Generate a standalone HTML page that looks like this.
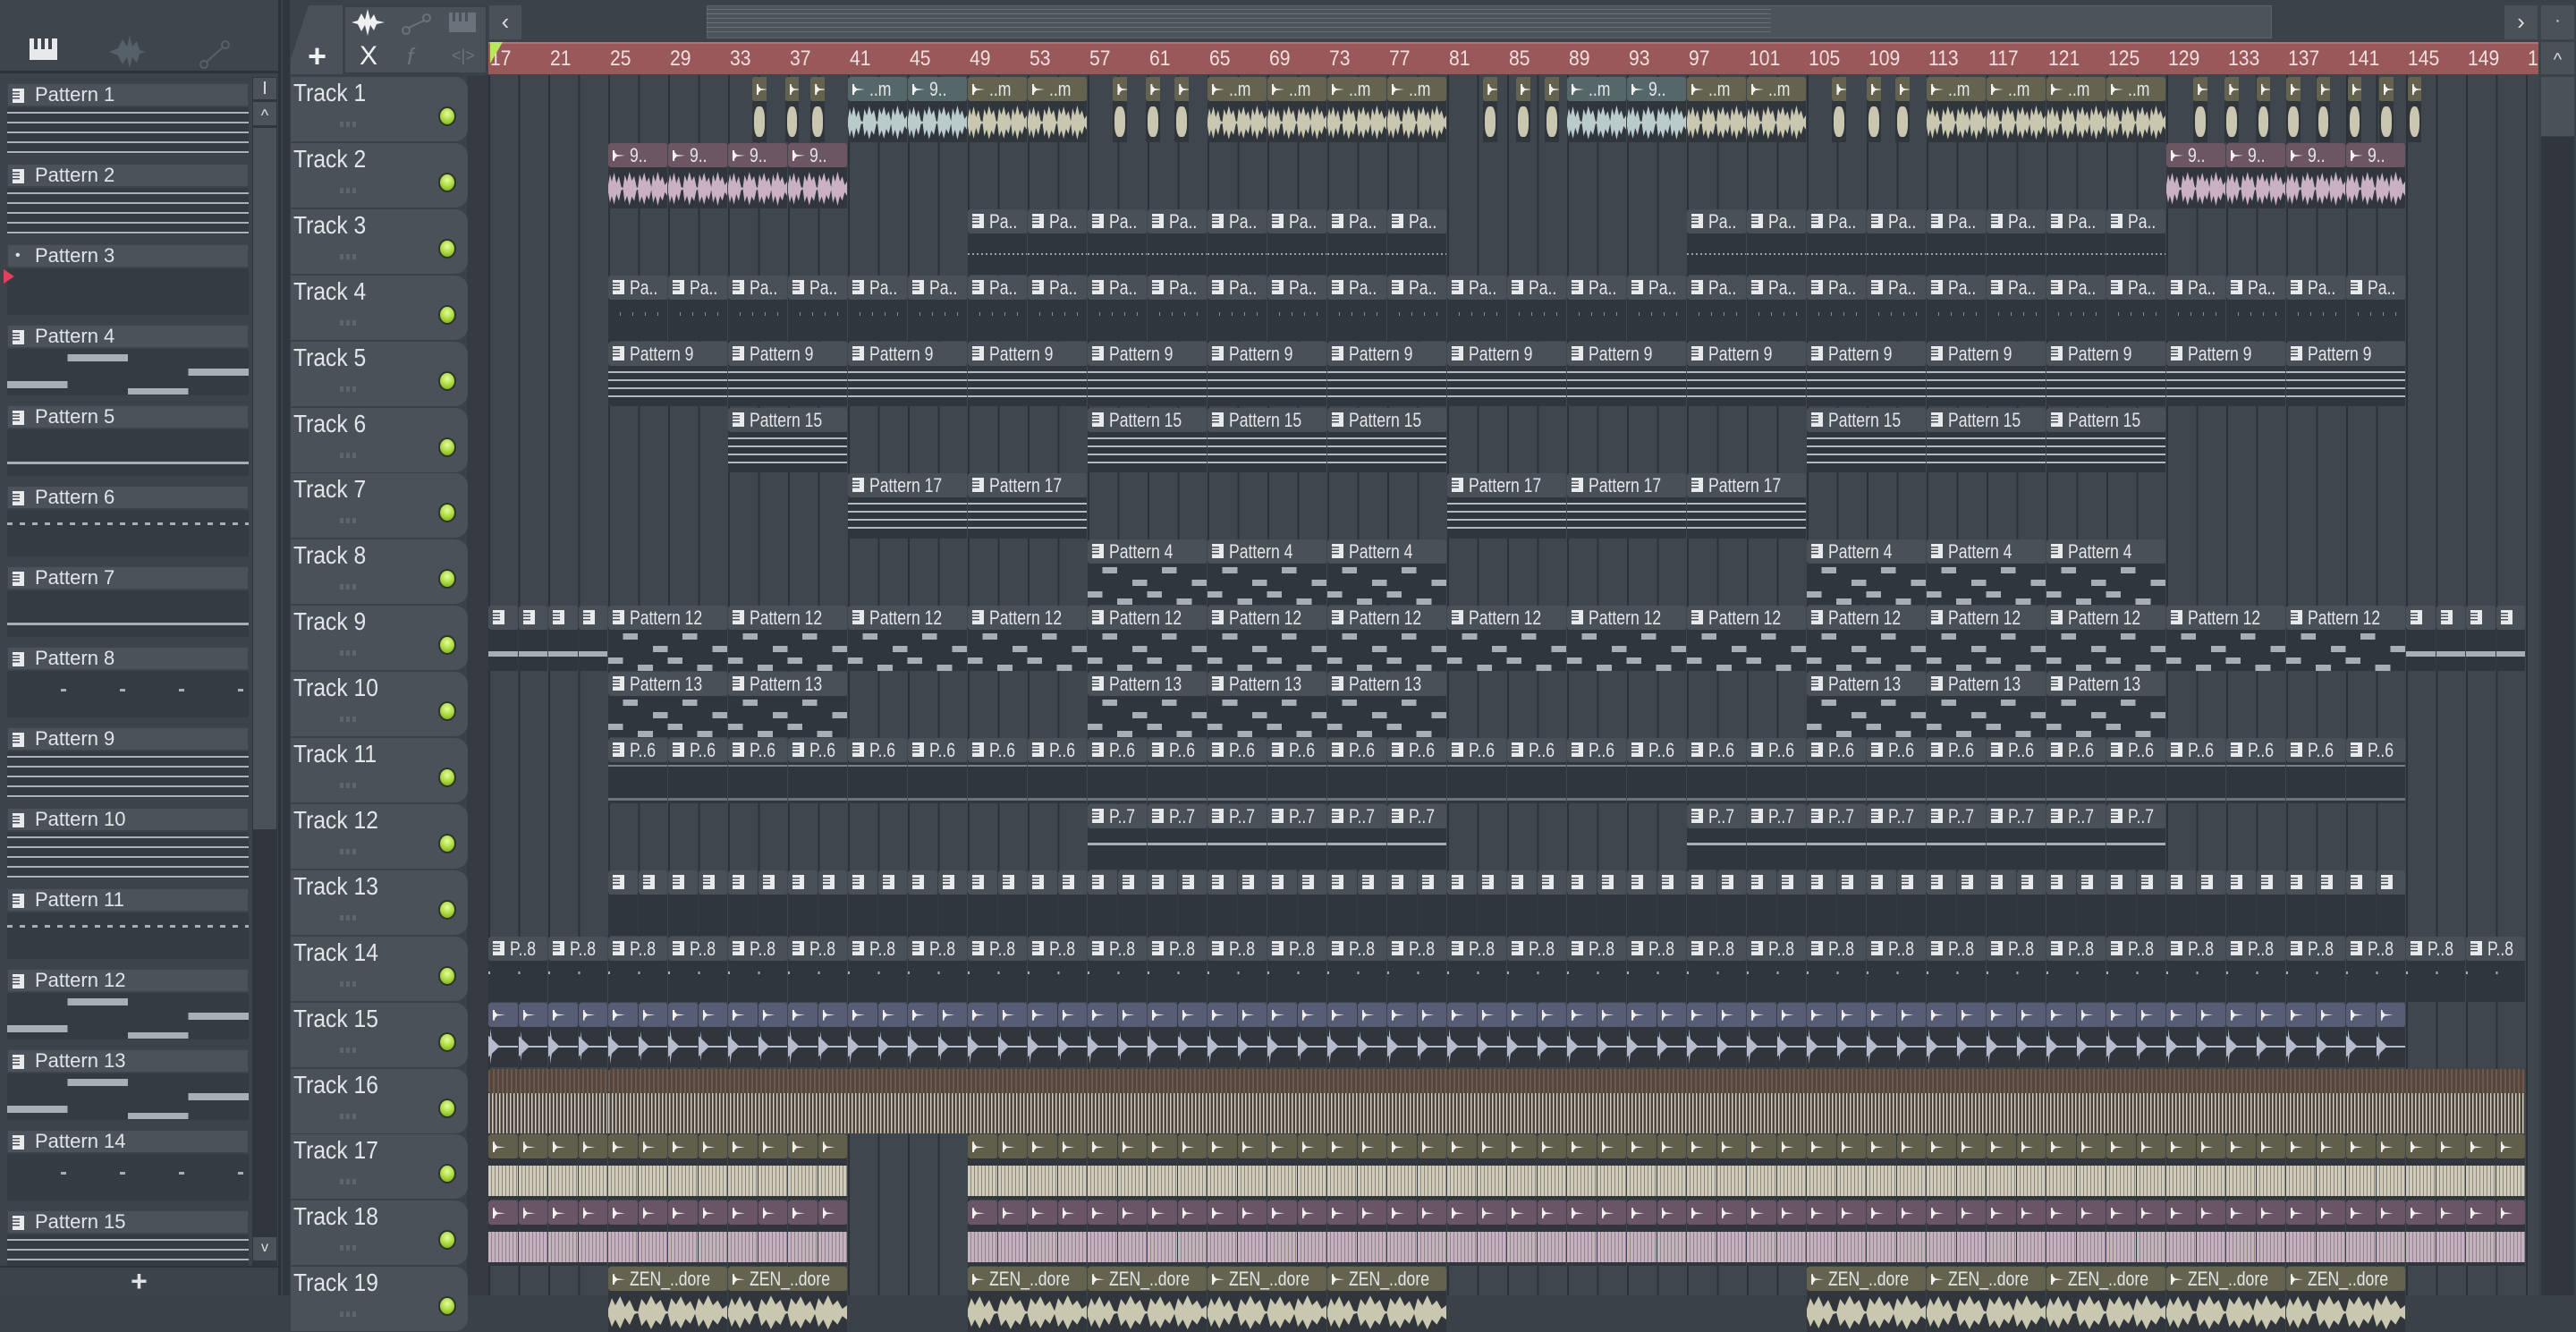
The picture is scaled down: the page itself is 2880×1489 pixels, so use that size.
<!DOCTYPE html>
<html><head><meta charset="utf-8">
<style>
*{margin:0;padding:0;box-sizing:border-box}
body{width:2880px;height:1448px;overflow:hidden;background:#3a4148;font-family:"Liberation Sans Narrow","Liberation Sans",sans-serif;color:#dde1e4;position:relative}
.a{position:absolute}
.pl{position:absolute;left:0;top:0;width:314px;height:1448px;background:#3c434a;border-right:3px solid #2c3237}
.ph{position:absolute;left:8px;width:270px;height:26px;background:#4b5259;border:1px solid #3f454c;font-size:22px;line-height:24px;padding-left:30px;color:#e2e5e8}
.pv{position:absolute;left:8px;width:270px;height:52px;background:#353b42}
.ic{position:absolute;width:13px;height:16px;background:#e8eaec;left:5px;top:5px}
.ic:after{content:"";position:absolute;left:0;top:3px;width:8px;height:10px;background:repeating-linear-gradient(#4b5259 0 1.5px,transparent 1.5px 3.5px)}
.th{position:absolute;left:325px;width:198px;height:72px;background:#4a5158;border-radius:0 14px 14px 0;}
.th span{position:absolute;left:3px;top:2px;font-size:28px;color:#e3e6e8;transform:scaleX(.88);transform-origin:left;white-space:nowrap}
.th i{position:absolute;left:55px;top:50px;width:20px;height:6px;background:repeating-linear-gradient(90deg,#5e656c 0 4px,transparent 4px 7px)}
.led{position:absolute;left:490px;width:20px;height:22px;border-radius:50%;background:radial-gradient(circle at 50% 35%,#e4ff9a,#a6d63a 55%,#6f9a1e);border:2px solid #2d3329}
.c{position:absolute;overflow:hidden}
.ch{position:absolute;left:0;top:0;right:0;height:27px;border-radius:3px;font-size:22px;line-height:27px;padding-left:26px;white-space:nowrap;color:#e4e6e8;overflow:hidden}
.ch b{font-weight:normal;position:absolute;left:24px;top:0;white-space:nowrap;transform:scaleX(.8);transform-origin:left}
.cb{position:absolute;left:0;right:0;top:27px;bottom:0}
.ap:before{content:"";position:absolute;left:5px;top:8px;width:14px;height:12px;background:#f3f0f0;clip-path:polygon(0 0,15% 0,15% 40%,100% 50%,15% 60%,15% 100%,0 100%,0 0,40% 50%,0 100%)}
.wv{position:absolute;left:0;right:0}
</style></head><body>

<div class="a" style="left:0;top:0;width:2880px;height:84px;background:#3b4249"></div>
<div class="pl">
  <div class="a" style="left:0;top:0;width:311px;height:82px;background:#3e454c;border-bottom:3px solid #2d3338"></div>
  <div class="a" style="left:33px;top:43px;width:31px;height:24px;background:#e7e9eb"></div>
  <div class="a" style="left:38px;top:43px;width:4px;height:12px;background:#3e454c"></div>
  <div class="a" style="left:46px;top:43px;width:4px;height:12px;background:#3e454c"></div>
  <div class="a" style="left:54px;top:43px;width:4px;height:12px;background:#3e454c"></div>
  <svg class="a" style="left:120px;top:38px" width="45" height="40"><path d="M2 20 L12 16 L17 6 L22 14 L25 2 L28 14 L33 8 L36 18 L43 20 L36 22 L33 32 L28 26 L25 38 L22 26 L17 34 L12 24 Z" fill="#566068"/></svg>
  <svg class="a" style="left:220px;top:42px" width="40" height="40"><circle cx="8" cy="30" r="4" fill="none" stroke="#566068" stroke-width="2"/><circle cx="32" cy="8" r="4" fill="none" stroke="#566068" stroke-width="2"/><line x1="11" y1="27" x2="29" y2="11" stroke="#566068" stroke-width="2"/></svg>
  <div id="pats"></div>
  <div class="a" style="left:282px;top:86px;width:28px;height:1330px;background:#30363c"></div>
  <div class="a" style="left:283px;top:87px;width:26px;height:24px;background:#4b5259;color:#ddd;font-size:20px;text-align:center;line-height:24px">I</div>
  <div class="a" style="left:283px;top:114px;width:26px;height:26px;background:#4b5259;color:#ddd;font-size:18px;text-align:center;line-height:30px">^</div>
  <div class="a" style="left:283px;top:143px;width:26px;height:784px;background:#4a5158"></div>
  <div class="a" style="left:283px;top:1383px;width:26px;height:26px;background:#4b5259;color:#ddd;font-size:16px;text-align:center;line-height:24px">v</div>
  <div class="a" style="left:0;top:1415px;width:311px;height:33px;background:#3c434a;border-top:2px solid #2d3338;text-align:center;font-size:32px;line-height:30px;color:#dfe2e5;font-weight:bold">+</div>
</div>

<div class="a" style="left:316px;top:0;width:8px;height:1448px;background:#30363c"></div>
<div class="a" style="left:325px;top:6px;width:58px;height:77px;background:#4a5158;clip-path:polygon(20px 0,100% 0,100% 100%,0 100%,0 60px);"></div>
<div class="a" style="left:344px;top:42px;font-size:36px;font-weight:bold;color:#eef0f2">+</div>
<div class="a" style="left:384px;top:6px;width:161px;height:77px;background:#4a5158;border:2px solid #3a4047"></div>
<svg class="a" style="left:392px;top:10px" width="40" height="30"><path d="M1 15 L8 13 L12 5 L16 12 L19 0 L22 12 L26 6 L29 13 L38 15 L29 17 L26 24 L22 18 L19 30 L16 18 L12 25 L8 17 Z" fill="#eef0f2"/></svg>
<svg class="a" style="left:448px;top:14px" width="36" height="26"><circle cx="6" cy="20" r="4" fill="none" stroke="#6a737b" stroke-width="2"/><circle cx="29" cy="6" r="4" fill="none" stroke="#6a737b" stroke-width="2"/><line x1="9" y1="17" x2="26" y2="9" stroke="#6a737b" stroke-width="2"/></svg>
<div class="a" style="left:502px;top:14px;width:30px;height:22px;background:#6a737b"></div>
<div class="a" style="left:506px;top:14px;width:3px;height:10px;background:#4a5158"></div><div class="a" style="left:513px;top:14px;width:3px;height:10px;background:#4a5158"></div><div class="a" style="left:520px;top:14px;width:3px;height:10px;background:#4a5158"></div>
<div class="a" style="left:402px;top:46px;font-size:30px;color:#eef0f2">X</div>
<div class="a" style="left:455px;top:48px;font-size:26px;color:#6a737b;font-style:italic">f</div>
<div class="a" style="left:505px;top:52px;font-size:18px;color:#6a737b">&lt;|&gt;</div>
<div class="a" style="left:547px;top:6px;width:36px;height:38px;background:#4a5158;color:#ddd;font-size:26px;text-align:center;line-height:36px">&lsaquo;</div>
<div class="a" style="left:790px;top:6px;width:1750px;height:37px;background:#4c545b;border:1px solid #5b636a"></div>
<div class="a" style="left:790px;top:10px;width:1190px;height:28px;background:repeating-linear-gradient(#7a848a 0 1px,transparent 1px 5px);opacity:.6"></div>
<div class="a" style="left:2800px;top:6px;width:37px;height:38px;background:#4a5158;color:#ddd;font-size:26px;text-align:center;line-height:36px">&rsaquo;</div>
<div class="a" style="left:2841px;top:6px;width:37px;height:38px;background:#4a5158;color:#ddd;font-size:20px;text-align:center;line-height:34px">·</div>
<div class="a" style="left:2841px;top:47px;width:37px;height:36px;background:#4a5158;color:#ddd;font-size:20px;text-align:center;line-height:40px">^</div>
<div class="a" style="left:2841px;top:86px;width:37px;height:66px;background:#4a5158"></div>
<div class="a" style="left:2841px;top:153px;width:37px;height:1295px;background:#30363c"></div>

<div class="a" id="ruler" style="left:546px;top:47px;width:2292px;height:36px;background:#99585a;border-top:2px solid #b07273;overflow:hidden"></div>
<div class="a" style="left:548px;top:47px;width:0;height:0;border-left:14px solid #b6e85e;border-right:10px solid transparent;border-bottom:24px solid transparent"></div>

<div class="a" style="left:522px;top:84px;width:24px;height:1364px;background:#353b41"></div>
<div class="a" id="grid" style="left:546px;top:84px;width:2292px;height:1364px;background:repeating-linear-gradient(90deg,#2b3136 0 2px,#3f464e 2px 33.5px);overflow:hidden"></div>
<div id="tracks"></div>

<script>
var BW=16.75,X0=546,RH=73.9,RT=86;
function X(b){return X0+(b-17)*BW;}
var r='';for(var b=17;b<=153;b+=4){r+='<div class="a" style="left:'+(X(b)-546+2)+'px;top:3px;font-size:24px;color:#f1dede;transform:scaleX(.88);transform-origin:left">'+b+'</div>';}
document.getElementById('ruler').innerHTML=r;
var p='';
for(var n=1;n<=15;n++){var y=86+(n-1)*90;
 p+='<div class="ph" style="top:'+(y+7)+'px">'+(n==3?'<span style="position:absolute;left:8px;font-size:16px">•</span>':'<div class="ic"></div>')+'Pattern '+n+'</div>';
 var pv='';
 if([1,2,9,10,15].indexOf(n)>=0)pv='background:repeating-linear-gradient(#353b42 0 5px,#b9bec3 5px 7px,#353b42 7px 11px),#353b42;opacity:.9';
 else if([4,12,13].indexOf(n)>=0)pv='background:linear-gradient(90deg,transparent 0 25%,#a9aeb4 25% 50%,transparent 50%) 0 6px/100% 8px no-repeat,linear-gradient(90deg,#a9aeb4 0 25%,transparent 25%) 0 36px/100% 8px no-repeat,linear-gradient(90deg,transparent 0 50%,#a9aeb4 50% 75%,transparent 75%) 0 44px/100% 7px no-repeat,linear-gradient(90deg,transparent 0 75%,#a9aeb4 75%) 0 22px/100% 8px no-repeat,#353b42';
 else if(n==5||n==7)pv='background:linear-gradient(#a9aeb4,#a9aeb4) 0 36px/100% 3px no-repeat,#353b42';
 else if(n==6||n==11)pv='background:repeating-linear-gradient(90deg,#a9aeb4 0 6px,transparent 6px 14px) 0 14px/100% 3px no-repeat,#353b42';
 else if(n==8||n==14)pv='background:repeating-linear-gradient(90deg,transparent 0 60px,#a9aeb4 60px 66px) 0 20px/100% 3px no-repeat,#353b42';
 else pv='background:#353b42';
 p+='<div class="pv" style="top:'+(y+34)+'px;'+pv+'"></div>';
}
p+='<div class="a" style="left:4px;top:301px;width:0;height:0;border-left:12px solid #e0405a;border-top:8px solid transparent;border-bottom:8px solid transparent"></div>';
document.getElementById('pats').innerHTML=p;

var C={pat:['#4a5058','#30363d'],ol:['#646350','#c9c7b0'],bl:['#56676a','#b9cbcb'],pk:['#6d5663','#c9b1c1'],bg:['#565d74','#b6bccd'],br:['#5e4f45','#cfc6b6'],o2:['#625e4c','#d0cabb'],p2:['#6a5566','#c7b0c4']};
var h='';
var env='polygon(0 40%,3% 10%,6% 30%,10% 5%,14% 35%,18% 15%,22% 45%,25% 48%,28% 12%,32% 30%,36% 3%,40% 28%,44% 15%,48% 45%,50% 48%,53% 10%,57% 28%,61% 5%,65% 32%,69% 18%,73% 46%,76% 10%,80% 30%,84% 2%,88% 30%,92% 16%,96% 40%,100% 30%,100% 70%,96% 60%,92% 84%,88% 70%,84% 98%,80% 70%,76% 90%,73% 54%,69% 82%,65% 68%,61% 95%,57% 72%,53% 90%,50% 52%,48% 55%,44% 85%,40% 72%,36% 97%,32% 70%,28% 88%,25% 52%,22% 55%,18% 85%,14% 65%,10% 95%,6% 70%,3% 90%,0 60%)';
function clip(t,s,len,label,type,body){
 var top=RT+t*RH, l=X(s), w=len*BW-1, col=C[type];
 var isA=type!='pat';
 var bb='';
 if(isA){
  if(type=='bg') bb='<div class="cb" style="background:#30363c"><div class="a" style="left:0;right:0;top:21px;height:2px;background:'+col[1]+'"></div><div class="a" style="left:2px;top:2px;width:3px;height:40px;background:'+col[1]+';clip-path:polygon(0 0,100% 45%,100% 55%,0 100%)"></div><div class="a" style="left:0;top:10px;width:12px;height:24px;background:'+col[1]+';clip-path:polygon(0 0,100% 48%,100% 52%,0 100%)"></div></div>';
  else if(type=='br') bb='<div class="cb" style="background:repeating-linear-gradient(90deg,#d3cbbd 0 1.5px,#4a443e 1.5px 4px)"></div>';
  else if(type=='o2'||type=='p2') bb='<div class="cb" style="background:#30363c"><div class="wv" style="top:8px;bottom:4px;background:repeating-linear-gradient(90deg,'+col[1]+' 0 3px,#8d8a80 3px 4px)"></div></div>';
  else if(len<=1) bb='<div class="cb" style="background:#30363c"><div class="a" style="left:2px;right:2px;top:6px;bottom:6px;background:'+col[1]+';border-radius:40%"></div></div>';
  else bb='<div class="cb" style="background:#30363c"><div class="wv" style="top:4px;bottom:2px;background:'+col[1]+';clip-path:'+env+'"></div></div>';
 } else bb='<div class="cb" style="background:#30363d;'+(body||'')+'"></div>';
 var hd;
 if(type=='br') hd='<div class="ch" style="background:repeating-linear-gradient(90deg,#6a5a4e 0 2px,#54463d 2px 5px)"></div>';
 else hd=isA?'<div class="ch ap" style="background:'+col[0]+'"><b>'+label+'</b></div>'
   :'<div class="ch" style="background:'+col[0]+'"><div class="ic"></div><b>'+label+'</b></div>';
 h+='<div class="c" style="left:'+l+'px;top:'+top+'px;width:'+w+'px;height:'+(RH-1)+'px">'+hd+bb+'</div>';
}
function seq(t,s,e,len,label,type,body){for(var b=s;b<e-0.01;b+=len)clip(t,b,len,label,type,body);}
for(var i=0;i<19;i++){var y=RT+i*RH;
 h+='<div class="th" style="top:'+y+'px"><span>Track '+(i+1)+'</span><i></i></div><div class="led" style="top:'+(y+33)+'px"></div>';}
[34.6,36.8,38.5,58.7,60.9,62.8,83.4,85.6,87.5,106.7,109,110.9,130.8,132.9,135,137,139,141.1,143.2,145.1].forEach(function(b){clip(0,b,1,'','ol');});
clip(0,41,4,'..m','bl');clip(0,45,4,'9..','bl');clip(0,49,4,'..m','ol');clip(0,53,4,'..m','ol');
seq(0,65,81,4,'..m','ol');clip(0,89,4,'..m','bl');clip(0,93,4,'9..','bl');seq(0,97,105,4,'..m','ol');seq(0,113,129,4,'..m','ol');
seq(1,25,41,4,'9..','pk');seq(1,129,145,4,'9..','pk');
var dotted='background:repeating-linear-gradient(90deg,#9aa0a6 0 2px,transparent 2px 5px) 0 22px/100% 2px no-repeat,#30363d';
seq(2,49,81,4,'Pa..','pat',dotted);seq(2,97,129,4,'Pa..','pat',dotted);
var ticks='background:repeating-linear-gradient(90deg,transparent 0 13px,#8a9096 13px 14px) 0 14px/100% 4px no-repeat,#30363d';
seq(3,25,145,4,'Pa..','pat',ticks);
var dense='background:repeating-linear-gradient(#30363d 0 4px,#b4b9be 4px 6px,#30363d 6px 9px) 0 2px/100% 40px no-repeat,#30363d';
seq(4,25,145,8,'Pattern 9','pat',dense);
seq(5,33,41,8,'Pattern 15','pat',dense);seq(5,57,81,8,'Pattern 15','pat',dense);seq(5,105,129,8,'Pattern 15','pat',dense);
seq(6,41,57,8,'Pattern 17','pat',dense);seq(6,81,105,8,'Pattern 17','pat',dense);
var steps='background:linear-gradient(90deg,transparent 0 12.5%,#a9aeb4 12.5% 25%,transparent 25% 62.5%,#a9aeb4 62.5% 75%,transparent 75%) 0 4px/100% 7px no-repeat,linear-gradient(90deg,transparent 0 37.5%,#a9aeb4 37.5% 50%,transparent 50% 87.5%,#a9aeb4 87.5%) 0 18px/100% 7px no-repeat,linear-gradient(90deg,#a9aeb4 0 12.5%,transparent 12.5% 50%,#a9aeb4 50% 62.5%,transparent 62.5%) 0 31px/100% 7px no-repeat,linear-gradient(90deg,transparent 0 25%,#a9aeb4 25% 37.5%,transparent 37.5% 75%,#a9aeb4 75% 87.5%,transparent 87.5%) 0 39px/100% 7px no-repeat,#30363d';
seq(7,57,81,8,'Pattern 4','pat',steps);seq(7,105,129,8,'Pattern 4','pat',steps);
seq(8,17,25,2,'','pat','background:linear-gradient(#a9aeb4,#a9aeb4) 0 24px/100% 6px no-repeat,#30363d');
seq(8,25,145,8,'Pattern 12','pat',steps);
seq(8,145,153,2,'','pat','background:linear-gradient(#a9aeb4,#a9aeb4) 0 24px/100% 6px no-repeat,#30363d');
seq(9,25,41,8,'Pattern 13','pat',steps);seq(9,57,81,8,'Pattern 13','pat',steps);seq(9,105,129,8,'Pattern 13','pat',steps);
var t11='background:linear-gradient(#7a8086,#7a8086) 0 3px/100% 2px no-repeat,linear-gradient(#6d7379,#6d7379) 0 40px/100% 3px no-repeat,#30363d';
seq(10,25,145,4,'P..6','pat',t11);
var t12='background:linear-gradient(#a9aeb4,#a9aeb4) 0 16px/100% 3px no-repeat,#30363d';
seq(11,57,81,4,'P..7','pat',t12);seq(11,97,129,4,'P..7','pat',t12);
seq(12,25,145,2,'','pat');
seq(13,17,153,4,'P..8','pat','background:repeating-linear-gradient(90deg,#a9aeb4 0 2px,transparent 2px 33.5px) 0 12px/100% 3px no-repeat,#30363d');
seq(14,17,145,2,'','bg');
clip(15,17,8,'','br');clip(15,25,128,'','br');
seq(16,17,25,2,'','o2');seq(16,25,41,2,'','o2');seq(16,49,153,2,'','o2');
seq(17,17,25,2,'','p2');seq(17,25,41,2,'','p2');seq(17,49,153,2,'','p2');
seq(18,25,41,8,'ZEN_..dore','ol');seq(18,49,81,8,'ZEN_..dore','ol');seq(18,105,145,8,'ZEN_..dore','ol');
document.getElementById('tracks').innerHTML=h;
</script>
</body></html>
